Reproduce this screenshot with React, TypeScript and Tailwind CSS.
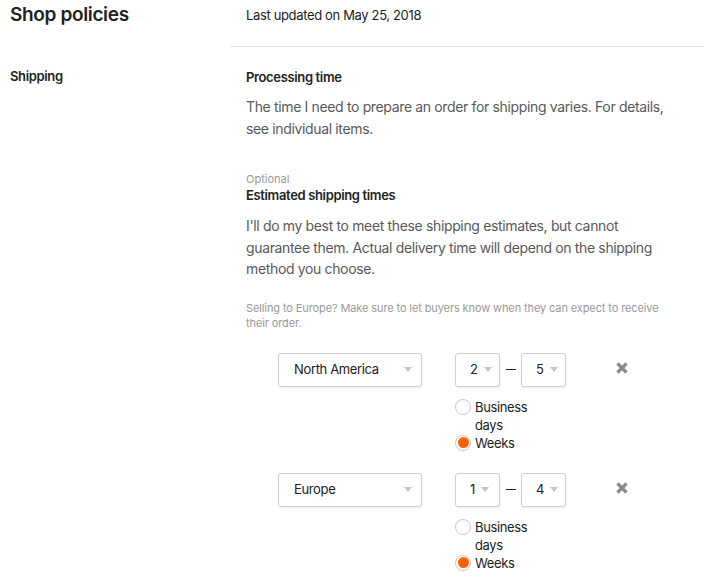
import React from "react";

const Caret: React.FC = () => (
  <svg width="8" height="5" viewBox="0 0 8 5" className="shrink-0">
    <path d="M0 0 L8 0 L4 5 Z" fill="#c4c4c4" />
  </svg>
);

const Radio: React.FC<{ checked?: boolean; label: string }> = ({ checked, label }) => (
  <label className="flex items-start gap-[4px]">
    <span className="mt-[1px] w-[16px] h-[16px] rounded-full border border-[#c8c8c8] bg-white flex items-center justify-center shrink-0">
      {checked && <span className="w-[11px] h-[11px] rounded-full bg-[#f56400]" />}
    </span>
    <span className="w-[58px] text-[13px] leading-[18px] text-[#222]">{label}</span>
  </label>
);

const NumberSelect: React.FC<{ value: string }> = ({ value }) => (
  <div className="w-[45px] h-[34px] border border-[#d0d0d0] rounded-[3px] shadow-[0_1px_2px_rgba(0,0,0,0.08)] bg-white flex items-center pl-[14px] gap-[6px]">
    <span className="text-[13px] text-[#222]">{value}</span>
    <Caret />
  </div>
);

const ShippingRow: React.FC<{ region: string; from: string; to: string }> = ({ region, from, to }) => (
  <div className="flex items-start pl-[32px]">
    {/* Region select */}
    <div className="w-[144px] h-[34px] border border-[#d0d0d0] rounded-[3px] shadow-[0_1px_2px_rgba(0,0,0,0.08)] bg-white flex items-center justify-between pl-[15px] pr-[9px]">
      <span className="text-[13px] text-[#222]">{region}</span>
      <Caret />
    </div>

    {/* Range + unit */}
    <div className="ml-[33px] flex flex-col">
      <div className="flex items-center">
        <NumberSelect value={from} />
        <span className="w-[21px] flex justify-center">
          <span className="block w-[10px] h-[1px] bg-[#222]" />
        </span>
        <NumberSelect value={to} />
      </div>
      <div className="mt-[11px] flex flex-col">
        <Radio label="Business days" />
        <Radio label="Weeks" checked />
      </div>
    </div>

    {/* Remove */}
    <button className="ml-[49px] mt-[8px]" aria-label="Remove">
      <svg width="14" height="14" viewBox="0 0 14 14">
        <path d="M2.5 2.5 L11.5 11.5 M11.5 2.5 L2.5 11.5" stroke="#8a8a8a" strokeWidth="3.2" />
      </svg>
    </button>
  </div>
);

export default function App() {
  return (
    <div className="w-[704px] h-[578px] bg-white overflow-hidden font-['Inter',sans-serif] tracking-[-0.022em] text-[#222]">
      {/* Header */}
      <div className="flex">
        <div className="w-[230px] pl-[10px] pt-[3px]">
          <h1 className="text-[19px] font-semibold leading-[24px]">Shop policies</h1>
        </div>
        <div className="flex-1 h-[47px] border-b border-[#e1e3df] pl-4 pt-[6px]">
          <p className="text-[13px] leading-[18px]">Last updated on May 25, 2018</p>
        </div>
      </div>

      {/* Shipping section */}
      <div className="flex">
        <div className="w-[230px] pl-[10px] pt-[20px]">
          <h2 className="text-[13px] font-semibold leading-[18px]">Shipping</h2>
        </div>
        <div className="w-[436px] pl-4 pt-[21px]">
          <h3 className="text-[13px] font-semibold leading-[18px]">Processing time</h3>
          <p className="mt-[10px] text-[14px] leading-[22px] text-[#595959]">
            The time I need to prepare an order for shipping varies. For details, see individual items.
          </p>

          <p className="mt-[32px] text-[11px] leading-[14px] tracking-normal text-[#999]">Optional</p>
          <h3 className="text-[13px] font-semibold leading-[18px]">Estimated shipping times</h3>
          <p className="mt-[11px] text-[14px] leading-[21.5px] text-[#595959]">
            I'll do my best to meet these shipping estimates, but cannot guarantee them. Actual delivery time will
            depend on the shipping method you choose.
          </p>
          <p className="mt-[21px] text-[11px] leading-[15px] tracking-[-0.01em] text-[#999]">
            Selling to Europe? Make sure to let buyers know when they can expect to receive their order.
          </p>

          <div className="mt-[22px]">
            <ShippingRow region="North America" from="2" to="5" />
          </div>
          <div className="mt-[21px]">
            <ShippingRow region="Europe" from="1" to="4" />
          </div>
        </div>
      </div>
    </div>
  );
}
